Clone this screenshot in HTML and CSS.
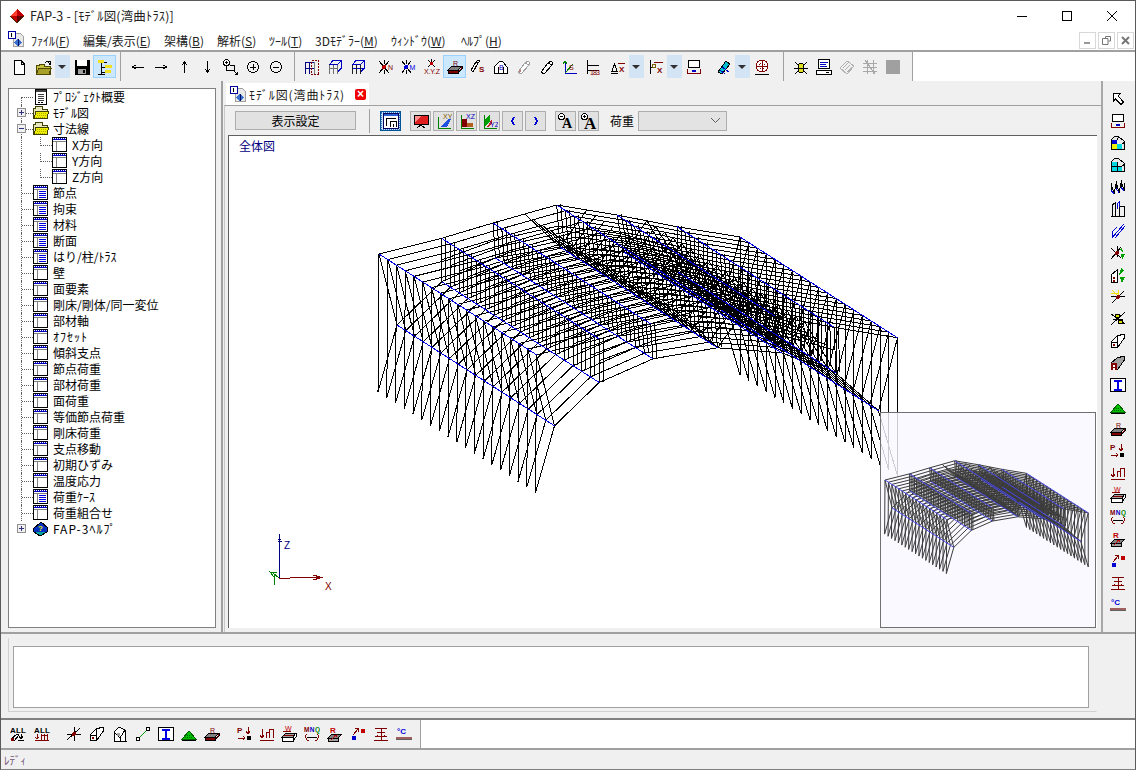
FILE: index.html
```html
<!DOCTYPE html>
<html lang="ja">
<head>
    <meta charset="UTF-8">
    <title>FAP-3 - [ﾓﾃﾞﾙ図(湾曲ﾄﾗｽ)]</title>
    <link rel="stylesheet" href="styles.css">
</head>
<body>
<svg class="sprite" aria-hidden="true">
    <defs>
        <symbol id="logo" viewBox="0 0 16 16"><path d="M8 1 15 8 8 15 1 8Z" fill="#c00000"/><path d="M8 1 8 8 1 8Z" fill="#ff4030"/><path d="M8 8 15 8 8 15Z" fill="#600000"/><path d="M1 8 8 15 15 8" fill="none" stroke="#403000"/></symbol>
        <symbol id="ap" viewBox="0 0 16 16"><path d="M5 2H12L15 5V15H5Z" fill="#e8e8e8" stroke="#a0a0a0"/><rect x="0.5" y="0.5" width="7" height="7" fill="#fff" stroke="#0000a0"/><path d="M3.5 2V6M3 2.5H4" stroke="#000"/><path d="M10 8 14 11.5 10 15 6 11.5Z" fill="#3a70d0"/><path d="M10 8V15" stroke="#001060"/></symbol>
        <symbol id="new" viewBox="0 0 16 16"><path d="M3.5 1.5H10L13.5 5V15.5H3.5Z M10 1.5V5H13.5" fill="#fff" stroke="#000"/></symbol>
        <symbol id="open" viewBox="0 0 16 16"><path d="M0.5 6.5H3L4 5H8V7H14V15H0.5Z" fill="#c8c040" stroke="#504800"/><path d="M0.5 15 3 9H15.5L13 15Z" fill="#a8a028" stroke="#504800"/><path d="M9 4 11 2H14V5M12.5 3.5 15 5 13 6" fill="none" stroke="#000"/></symbol>
        <symbol id="save" viewBox="0 0 16 16"><path d="M0.5 0.5H15.5V15.5H0.5Z" fill="#000"/><rect x="3" y="1" width="10" height="6" fill="#fff"/><rect x="4" y="10" width="8" height="5" fill="#a0a0a0"/><rect x="9" y="11" width="2" height="3" fill="#000"/></symbol>
        <symbol id="treeb" viewBox="0 0 16 16"><path d="M4.5 1V15M4.5 3H10M4.5 8H10M4.5 13H8M1 15H8" stroke="#000" fill="none"/><path d="M1 1H7V4H1ZM8 6H15V9H8ZM8 11H14V14H8Z" fill="#f0e020"/></symbol>
        <symbol id="al" viewBox="0 0 16 16"><path d="M2 8H14M2 8 6 6M2 8 6 10" stroke="#000" fill="none"/></symbol>
        <symbol id="ar" viewBox="0 0 16 16"><path d="M2 8H14M14 8 10 6M14 8 10 10" stroke="#000" fill="none"/></symbol>
        <symbol id="au" viewBox="0 0 16 16"><path d="M8.500 2V14M8.500 2 6.500 6M8.500 2 10.500 6" stroke="#000" fill="none"/></symbol>
        <symbol id="ad" viewBox="0 0 16 16"><path d="M8.500 2V14M8.500 14 6.500 10M8.500 14 10.500 10" stroke="#000" fill="none"/></symbol>
        <symbol id="zbox" viewBox="0 0 16 16"><circle cx="4.500" cy="3.500" r="3" fill="#fff" stroke="#000"/><path d="M4.500 2V5M3 3.500H6M4 7V11H12V6H8M12 12 15 15M13 15H15V13" stroke="#000" fill="none"/></symbol>
        <symbol id="zin" viewBox="0 0 16 16"><circle cx="8" cy="8" r="5.500" fill="none" stroke="#000"/><path d="M5 8H11M8 5V11" stroke="#000"/></symbol>
        <symbol id="zout" viewBox="0 0 16 16"><circle cx="8" cy="8" r="5.500" fill="none" stroke="#000"/><path d="M5 8H11" stroke="#000"/></symbol>
        <symbol id="f1" viewBox="0 0 16 16"><path d="M1 3.500H11M1 9.500H11M1.500 3V15M5.500 3V15" stroke="#000080" fill="none"/><path d="M7.500 1.500H14.500V15.500H7.500Z" stroke="#800000" stroke-dasharray="2 1" fill="none"/><path d="M10 3V15" stroke="#808080"/></symbol>
        <symbol id="f2" viewBox="0 0 16 16"><path d="M6 1.500H14.500L10.500 5.500H2.500ZM14.500 1.500V9L10.500 13" fill="none" stroke="#0000c0"/><path d="M2.500 5.500V15M6.500 5.500V15M10.500 5.500V15M2.500 9.500H10.500" stroke="#707070" fill="none"/></symbol>
        <symbol id="f3" viewBox="0 0 16 16"><path d="M6 1.500H14.500L10.500 5.500H2.500ZM14.500 1.500V9L10.500 13M2.500 9.500H14" fill="none" stroke="#0000c0"/><path d="M2.500 5.500V15M6.500 5.500V15M10.500 5.500V15" stroke="#202020" fill="none"/></symbol>
        <symbol id="sn" viewBox="0 0 16 16"><path d="M1 2 11 14M11 2 1 14M6 1V5M6 11V15" stroke="#000" fill="none"/><circle cx="6" cy="8" r="2" fill="#c00000"/><text x="10" y="11" class="t" fill="#800000">N</text></symbol>
        <symbol id="sm" viewBox="0 0 16 16"><path d="M1 2 10 14M10 2 1 14M5 1V5M5 11V15" stroke="#000" fill="none"/><circle cx="5" cy="8" r="2" fill="#0000e0"/><text x="8.500" y="11" class="t" fill="#0000e0">M</text></symbol>
        <symbol id="sxyz" viewBox="0 0 16 16"><path d="M4 1 11 8M11 1 4 8M7.500 0V3" stroke="#000" fill="none"/><circle cx="7.500" cy="4.500" r="1.500" fill="#c00000"/><text x="0" y="15" class="t" fill="#800000" textLength="16">X.Y.Z</text></symbol>
        <symbol id="plate" viewBox="0 0 16 16"><path d="M1 11 5 7H15L11 11Z" fill="#808080" stroke="#000"/><path d="M1 11H11V14H1ZM11 14 15 10V7" fill="#800000" stroke="#000"/><text x="6" y="7" class="t" fill="#800000">R</text></symbol>
        <symbol id="bs" viewBox="0 0 16 16"><path d="M1 11 6 3 8 4 3 13Z M6 3 8 1 10 2 8 4M8 4 3 13 1 11" fill="#fff" stroke="#000"/><text x="9" y="13" class="t b" fill="#800000">S</text></symbol>
        <symbol id="bb" viewBox="0 0 16 16"><path d="M1 8 7 2 10 3 14 8V14H1Z" fill="#fff" stroke="#000"/><path d="M5 8V14M10 8V14" stroke="#000"/><text x="6" y="11" class="t" fill="#0000c0">B</text></symbol>
        <symbol id="bgray" viewBox="0 0 16 16"><path d="M2 13 9 4 12 2 14 4 13 6 5 15Z M9 4 13 6" fill="#fff" stroke="#a0a0a0"/><rect x="3" y="11" width="2" height="2" fill="#c08080"/></symbol>
        <symbol id="bplain" viewBox="0 0 16 16"><path d="M2 13 9 4 12 2 14 4 13 6 5 15Z M9 4 13 6" fill="#fff" stroke="#000"/></symbol>
        <symbol id="axs" viewBox="0 0 16 16"><path d="M3 2V14H15" stroke="#0000c0" fill="none"/><path d="M3 2 1 5M3 2 5 5" stroke="#008000" fill="none"/><path d="M3 14 11 5" stroke="#008000"/><text x="7" y="11" class="t" fill="#800000">S</text></symbol>
        <symbol id="beamh" viewBox="0 0 16 16"><path d="M2 1V15M2 6H6M2 11H14M6 6H14" stroke="#000" fill="none"/><text x="5" y="16" class="t" fill="#800000" textLength="10">183</text></symbol>
        <symbol id="lx1" viewBox="0 0 16 16"><path d="M1 14H8M4.500 5 2 12H7Z" fill="none" stroke="#000"/><path d="M8 4H15" stroke="#800000"/><text x="9" y="13" class="t b" fill="#800000">X</text></symbol>
        <symbol id="lx2" viewBox="0 0 16 16"><path d="M2 1V15M2 8H6" stroke="#000" fill="none"/><circle cx="6" cy="7" r="2" fill="none" stroke="#806000"/><path d="M6 3H15" stroke="#800000"/><text x="9" y="14" class="t b" fill="#800000">X</text></symbol>
        <symbol id="brk" viewBox="0 0 16 16"><rect x="2.500" y="1.500" width="11" height="7" fill="#fff" stroke="#000"/><path d="M1.500 10V14.500H14.500V10" fill="none" stroke="#800000"/><rect x="6" y="11" width="4" height="2" fill="#0000c0"/></symbol>
        <symbol id="penb" viewBox="0 0 16 16"><path d="M2 13 10 2 14 5 6 15Z" fill="#00c0d0" stroke="#000"/><path d="M6 8 13 13M4 11 9 15" stroke="#0000c0"/></symbol>
        <symbol id="globe" viewBox="0 0 16 16"><circle cx="8" cy="7" r="6" fill="#fff" stroke="#800000"/><circle cx="8" cy="7" r="3" fill="none" stroke="#800000" stroke-dasharray="1 1"/><path d="M8 1V13M2 7H14" stroke="#800000"/><path d="M1 15H15" stroke="#000"/></symbol>
        <symbol id="bug" viewBox="0 0 16 16"><ellipse cx="8" cy="9" rx="3" ry="5" fill="#e0e020" stroke="#000"/><path d="M2 3 5 6M14 3 11 6M1 9H5M15 9H11M2 15 5 12M14 15 11 12M5 9H11" stroke="#000"/></symbol>
        <symbol id="pc" viewBox="0 0 16 16"><rect x="2.500" y="0.500" width="11" height="9" fill="#fff" stroke="#000"/><path d="M4 3H12M4 5H10M4 7H11" stroke="#0000c0"/><path d="M0.500 11.500H15.500V15.500H0.500Z" fill="#fff" stroke="#000"/><path d="M10 13H13" stroke="#000"/></symbol>
        <symbol id="g1" viewBox="0 0 16 16"><path d="M1 9 8 2 15 7 8 15Z M4 9 9 4M6 11 11 6M8 13 13 8" fill="none" stroke="#b0b0b0"/></symbol>
        <symbol id="g2" viewBox="0 0 16 16"><path d="M1 4H15M1 8H15M1 12H15M5 1V15M11 1V15M3 1 13 15" fill="none" stroke="#a8a8a8"/></symbol>
        <symbol id="g3" viewBox="0 0 16 16"><rect x="1" y="1" width="14" height="14" fill="#a0a0a0"/></symbol>
        <symbol id="cur" viewBox="0 0 16 16"><path d="M3.500 2.500H10L8 5 13.500 11 11 13.500 5.500 8 3.500 10Z" fill="#fff" stroke="#000"/></symbol>
        <symbol id="cube1" viewBox="0 0 16 16"><path d="M1.500 4.500 4.500 1.500H8.500L14.500 6.500V14.500H1.500Z" fill="#e8e8e8" stroke="#000"/><rect x="2" y="5" width="5" height="4" fill="#0000d0"/><rect x="2" y="9" width="5" height="5" fill="#f0f000"/><rect x="7" y="9" width="5" height="5" fill="#00d8e0"/><path d="M7 5 8.500 1.500M12.500 9 14.500 6.500" stroke="#000"/></symbol>
        <symbol id="cube2" viewBox="0 0 16 16"><path d="M1.500 4.500 4.500 1.500H8.500L14.500 6.500V14.500H1.500Z" fill="#e8e8e8" stroke="#000"/><rect x="2" y="5" width="5" height="9" fill="#00d8e0"/><rect x="7" y="9" width="5" height="5" fill="#00d8e0"/><path d="M2 9.500H12M7.500 5V14M12.500 9 14.500 6.500" stroke="#000"/></symbol>
        <symbol id="waves" viewBox="0 0 16 16"><path d="M1 4V11M6 2V9M11 1V8M1 4 4 15 6 5M6 2 9 14 11 4M11 1 14 12 15 4" fill="none" stroke="#000"/><path d="M1 11 4 15M6 9 9 14M11 8 14 12" stroke="#0000d0"/></symbol>
        <symbol id="wall" viewBox="0 0 16 16"><path d="M1 15H15M2 15V4L5 2V15M9 15V5H14V15" stroke="#000" fill="none"/><path d="M7 8V3L9 1V6" stroke="#0000d0" fill="none"/></symbol>
        <symbol id="pen2" viewBox="0 0 16 16"><path d="M2 15 14 1M5 15 15 3M2 15V9L7 4M5 15 9 11" fill="none" stroke="#0000d0"/></symbol>
        <symbol id="ngreen" viewBox="0 0 16 16"><path d="M1 14 11 2M1 3 11 13M7 1V12" stroke="#000"/><circle cx="7" cy="8" r="2" fill="#800000"/><path d="M10 5 12 2 13 7ZM11 9 15 9 12 15Z" fill="#00a000"/></symbol>
        <symbol id="bgreen" viewBox="0 0 16 16"><path d="M1 8 7 3V15H1Z" fill="#fff" stroke="#000"/><rect x="3" y="10" width="2" height="2" fill="#800000"/><rect x="3" y="13" width="2" height="2" fill="#800000"/><path d="M9 8 11 1 14 4ZM10 10 15 10 12 16Z" fill="#00a000"/></symbol>
        <symbol id="nyel" viewBox="0 0 16 16"><path d="M2 14 14 2" stroke="#000"/><path d="M1 7H15" stroke="#000"/><path d="M2 1 9 8M8 1V8M1 4H9" stroke="#f0e000"/><circle cx="8" cy="8" r="2" fill="#800000"/></symbol>
        <symbol id="nsq" viewBox="0 0 16 16"><path d="M1 3 15 13M15 1 1 14M3 8H13" stroke="#000"/><rect x="5" y="3" width="4" height="3" fill="#e0e000" stroke="#000"/><rect x="8" y="9" width="4" height="3" fill="#e0e000" stroke="#000"/></symbol>
        <symbol id="bred" viewBox="0 0 16 16"><path d="M1 8 7 3 14 1 15 4 8 14 1 15Z" fill="#a0a0a0" stroke="#000"/><rect x="1" y="8" width="6" height="7" fill="#800000"/><rect x="3" y="10" width="2" height="2" fill="#fff"/><rect x="3" y="13" width="2" height="2" fill="#fff"/></symbol>
        <symbol id="bar" viewBox="0 0 16 16"><path d="M1 9 7 3 14 1 15 4 8 14 1 15Z" fill="#fff" stroke="#000"/><path d="M7 3V14M1 9H7" stroke="#000"/><rect x="3" y="11" width="2" height="2" fill="#800000"/></symbol>
        <symbol id="ibeam" viewBox="0 0 16 16"><rect x="0.500" y="1.500" width="15" height="13" fill="#fff" stroke="#000" stroke-width="1"/><path d="M4 3.500H12M4 12.500H12M8 3V13" stroke="#0000e0" stroke-width="2"/></symbol>
        <symbol id="tri" viewBox="0 0 16 16"><path d="M1 13 8 5 15 13Z" fill="#00c000" stroke="#006000"/><path d="M4 11H12M6 9H10" stroke="#006000" stroke-dasharray="1 1"/><path d="M1 14H15" stroke="#000"/></symbol>
        <symbol id="pload" viewBox="0 0 16 16"><text x="0" y="7" class="t b" fill="#800000">P</text><path d="M11 1V8M9 5 11 8 13 5M1 12H8M6 10 8 12 6 14" stroke="#800000" fill="none"/><rect x="10" y="10" width="4" height="4" fill="#000"/></symbol>
        <symbol id="bload" viewBox="0 0 16 16"><path d="M3 3V12M1 9 3 12 5 9M1 14.500H15" stroke="#800000" fill="none"/><path d="M7 12V6H10V3H14V12M10 6V12" stroke="#800000" fill="none"/></symbol>
        <symbol id="wload" viewBox="0 0 16 16"><path d="M1 11 5 7H15L12 11Z" fill="#a0a0a0" stroke="#000"/><path d="M1 11H12V15H1ZM12 15 15 11V7" fill="#fff" stroke="#000"/><path d="M2 5H10M3 9H12" stroke="#800000"/><text x="4" y="5" class="t" fill="#c00000">W</text></symbol>
        <symbol id="mnq" viewBox="0 0 16 16"><text x="0" y="6" class="t b s7" textLength="16"><tspan fill="#800000">M</tspan><tspan fill="#0000c0">N</tspan><tspan fill="#008000">Q</tspan></text><path d="M3 11H13" stroke="#000"/><path d="M3 8 1 10 3 14 5 15M13 8 15 10 13 14 11 15" stroke="#800000" fill="none"/></symbol>
        <symbol id="rload" viewBox="0 0 16 16"><path d="M1 12 5 8H15L11 12Z" fill="#808080" stroke="#000"/><path d="M1 12H11V15H1Z" fill="#a0a0a0" stroke="#000"/><path d="M4 14 9 9M7 9H9V11" stroke="#c00000" fill="none"/><text x="3" y="7" class="t b" fill="#c00000">R</text></symbol>
        <symbol id="squares" viewBox="0 0 16 16"><rect x="11" y="3" width="4" height="4" fill="#c00000"/><rect x="2" y="10" width="4" height="4" fill="#0000d0"/><path d="M3 9 8 3M5 2.500H8.500V6" stroke="#800000" fill="none"/></symbol>
        <symbol id="hizumi" viewBox="0 0 16 16"><path d="M2 2.500H14M4 6.500H12M2 10.500H14M1 14.500H15M8 3V14M4 9 6 11M12 9 10 11" stroke="#800000" fill="none"/></symbol>
        <symbol id="degc" viewBox="0 0 16 16"><text x="1" y="8" class="t b" fill="#0000e0">°C</text><rect x="0" y="11" width="16" height="2" fill="#a06060"/><rect x="0" y="13" width="16" height="1" fill="#606060"/></symbol>
        <symbol id="all1" viewBox="0 0 16 16"><text x="0" y="7" class="t b" fill="#000" textLength="16">ALL</text><path d="M1 13 7 8 9 9 4 15ZM11 8V12M9 10 11 13 13 10M8 14.500H14" fill="none" stroke="#000"/><rect x="1" y="12" width="3" height="3" fill="#800000"/></symbol>
        <symbol id="all2" viewBox="0 0 16 16"><text x="0" y="7" class="t b" fill="#000" textLength="16">ALL</text><path d="M1 14.500H15M3 8V13M1 11 3 13 5 11M7 8V14M10 8V14M13 8V14M7 9H13" fill="none" stroke="#800000"/></symbol>
        <symbol id="hex" viewBox="0 0 16 16"><path d="M2 6 7 1 13 4 14 15H2Z" fill="#fff" stroke="#000"/><path d="M2 6 8 12 13 4M8 12V15" fill="none" stroke="#000"/><rect x="5" y="7" width="3" height="3" fill="#a0a0a0"/></symbol>
        <symbol id="lnode" viewBox="0 0 16 16"><path d="M3 13 13 3" stroke="#00a000" stroke-dasharray="2 1"/><rect x="1.500" y="11.500" width="3" height="3" fill="#fff" stroke="#000"/><rect x="11.500" y="1.500" width="3" height="3" fill="#fff" stroke="#000"/></symbol>
        <symbol id="ncross" viewBox="0 0 16 16"><path d="M1 14 14 2M1 8H15M8 1V15" stroke="#000"/><circle cx="8" cy="8" r="2" fill="#800000"/></symbol>
        <symbol id="vf" viewBox="0 0 16 16"><path d="M0.500 0.500H15.500V15.500H0.500Z" fill="#fff" stroke="#000060"/><rect x="1" y="1" width="14" height="2" fill="#3060d0"/><path d="M3.500 5.500H12.500M3.500 5V13M7.500 8.500H13.500V13.500M7.500 8V13.500M10.500 11V13.500" fill="none" stroke="#000"/></symbol>
        <symbol id="board" viewBox="0 0 16 16"><rect x="1" y="2" width="14" height="9" fill="#e02020" stroke="#000"/><path d="M2 3H9L2 9Z" fill="#ff9090"/><path d="M8 11V13M4 15 8 12 12 15" stroke="#000" fill="none"/></symbol>
        <symbol id="pxy" viewBox="0 0 16 16"><path d="M2 4V15H15" stroke="#008000" fill="none"/><path d="M4 14 12 6H15L11 14Z" fill="#2050e0"/><text x="7" y="5.500" class="t" fill="#806000">XY</text></symbol>
        <symbol id="pxz" viewBox="0 0 16 16"><path d="M2 2V15H15" stroke="#008000" fill="none"/><rect x="3" y="6" width="5" height="8" fill="#800000"/><rect x="8" y="10" width="6" height="4" fill="#b06020"/><text x="7" y="5.500" class="t" fill="#0000c0">XZ</text></symbol>
        <symbol id="pyz" viewBox="0 0 16 16"><path d="M2 2V15H15" stroke="#008000" fill="none"/><path d="M3 14V6L8 2V8L3 14Z" fill="#00a000"/><path d="M5 14 10 6V10L7 14Z" fill="#c02020"/><text x="8" y="14" class="t" fill="#0000c0">YZ</text></symbol>
        <symbol id="lt" viewBox="0 0 16 16"><path d="M9.500 4 6.500 8 9.500 12" stroke="#0000d0" stroke-width="1.500" fill="none"/></symbol>
        <symbol id="gt" viewBox="0 0 16 16"><path d="M6.500 4 9.500 8 6.500 12" stroke="#0000d0" stroke-width="1.500" fill="none"/></symbol>
        <symbol id="asm" viewBox="0 0 16 16"><circle cx="3.500" cy="3.500" r="3" fill="#fff" stroke="#000"/><path d="M2 3.500H5" stroke="#000"/><text x="4" y="15" class="a">A</text></symbol>
        <symbol id="alg" viewBox="0 0 16 16"><circle cx="3.500" cy="3.500" r="3" fill="#fff" stroke="#000"/><path d="M2 3.500H5M3.500 2V5" stroke="#000"/><text x="3" y="15.500" class="a lg">A</text></symbol>
        <symbol id="prj" viewBox="0 0 16 16"><path d="M2.500 0.500H13.500V15.500H2.500Z" fill="#fff" stroke="#000"/><rect x="3" y="1" width="10" height="2" fill="#404040"/><path d="M5 5H11M5 7H11M5 9H11M5 11H11" stroke="#404040"/><path d="M5 13H11" stroke="#000" stroke-dasharray="2 1"/></symbol>
        <symbol id="fold" viewBox="0 0 16 16"><path d="M0.500 3.500H2L3 1.500H9V4H14.500V13.500H0.500Z" fill="#e8e8c0" stroke="#404000"/><path d="M1 13.500 3 6.500H15.500L14 14Z" fill="#f0f000" stroke="#404000"/><path d="M4 8H14M4 10H14M3 12H13" stroke="#a8a800" stroke-dasharray="1 1"/></symbol>
        <symbol id="tbl" viewBox="0 0 16 16"><rect x="0.500" y="0.500" width="14" height="14" fill="#fff" stroke="#000"/><rect x="1" y="1" width="13" height="2" fill="#0000c0"/><path d="M1 1.500H14" stroke="#fff" stroke-dasharray="1 1"/><path d="M1 4.500H14M4.500 4V14" stroke="#808080"/></symbol>
        <symbol id="tbb" viewBox="0 0 16 16"><rect x="0.500" y="0.500" width="14" height="14" fill="#fff" stroke="#000"/><rect x="1" y="1" width="13" height="2" fill="#0000c0"/><path d="M1 1.500H14" stroke="#fff" stroke-dasharray="1 1"/><path d="M1 4.500H14M4.500 4V14" stroke="#808080"/><path d="M6 6.500H13M6 8.500H13M6 10.500H13M6 12.500H13" stroke="#0000e0"/></symbol>
        <symbol id="book" viewBox="0 0 16 16"><path d="M0 8 8 1 15 7 14 11 7 15 1 11Z" fill="#0030c0" stroke="#000"/><path d="M1 11 7 15 14 11" fill="#00a0a0" stroke="#000"/><text x="5" y="10" class="t b" fill="#f0f000">?</text></symbol>
    </defs>
</svg>

<div class="window">
    <div class="titlebar">
        <svg class="ic logo"><use href="#logo"/></svg>
        <span class="title-text">FAP-3 - [ﾓﾃﾞﾙ図(湾曲ﾄﾗｽ)]</span>
        <div class="win-btns">
            <div class="win-btn"><svg width="12" height="12"><path d="M1 6.500H11" stroke="#000"/></svg></div>
            <div class="win-btn"><svg width="12" height="12"><rect x="1.500" y="1.500" width="9" height="9" fill="none" stroke="#000"/></svg></div>
            <div class="win-btn"><svg width="12" height="12"><path d="M1 1 11 11M11 1 1 11" stroke="#000"/></svg></div>
        </div>
    </div>

    <div class="menubar">
        <svg class="ic menu-icon"><use href="#ap"/></svg>
        <div class="menu-items">
            <span>ﾌｧｲﾙ(<u>F</u>)</span>
            <span>編集/表示(<u>E</u>)</span>
            <span>架構(<u>B</u>)</span>
            <span>解析(<u>S</u>)</span>
            <span>ﾂｰﾙ(<u>T</u>)</span>
            <span>3Dﾓﾃﾞﾗｰ(<u>M</u>)</span>
            <span>ｳｨﾝﾄﾞｳ(<u>W</u>)</span>
            <span>ﾍﾙﾌﾟ(<u>H</u>)</span>
        </div>
        <div class="mdi-btns">
            <div class="mdi-btn"><svg width="9" height="9"><rect x="1" y="6" width="6" height="2" fill="#999"/></svg></div>
            <div class="mdi-btn"><svg width="9" height="9"><path d="M3.500 2.500V0.500H8.500V5H6.500M0.500 2.500H6V8.500H0.500Z" fill="none" stroke="#777"/></svg></div>
            <div class="mdi-btn"><svg width="9" height="9"><path d="M1 1 8 8M8 1 1 8" stroke="#777" stroke-width="2"/></svg></div>
        </div>
    </div>

    <div class="toolbar">
        <div class="tb-group first">
            <div class="tb"><svg class="ic"><use href="#new"/></svg></div>
            <div class="tb sp2"><svg class="ic"><use href="#open"/></svg></div>
            <div class="drop"></div>
            <div class="tb"><svg class="ic"><use href="#save"/></svg></div>
            <div class="tb on"><svg class="ic"><use href="#treeb"/></svg></div>
        </div>
        <div class="tb-group">
            <div class="tb"><svg class="ic"><use href="#al"/></svg></div>
            <div class="tb"><svg class="ic"><use href="#ar"/></svg></div>
            <div class="tb"><svg class="ic"><use href="#au"/></svg></div>
            <div class="tb"><svg class="ic"><use href="#ad"/></svg></div>
            <div class="tb"><svg class="ic"><use href="#zbox"/></svg></div>
            <div class="tb"><svg class="ic"><use href="#zin"/></svg></div>
            <div class="tb"><svg class="ic"><use href="#zout"/></svg></div>
        </div>
        <div class="tb-group wide">
            <div class="tb"><svg class="ic"><use href="#f1"/></svg></div>
            <div class="tb"><svg class="ic"><use href="#f2"/></svg></div>
            <div class="tb"><svg class="ic"><use href="#f3"/></svg></div>
            <div class="tb sp5"><svg class="ic"><use href="#sn"/></svg></div>
            <div class="tb"><svg class="ic"><use href="#sm"/></svg></div>
            <div class="tb"><svg class="ic"><use href="#sxyz"/></svg></div>
            <div class="tb on"><svg class="ic"><use href="#plate"/></svg></div>
            <div class="tb"><svg class="ic"><use href="#bs"/></svg></div>
            <div class="tb"><svg class="ic"><use href="#bb"/></svg></div>
            <div class="tb"><svg class="ic"><use href="#bgray"/></svg></div>
            <div class="tb"><svg class="ic"><use href="#bplain"/></svg></div>
            <div class="tb"><svg class="ic"><use href="#axs"/></svg></div>
            <div class="tb"><svg class="ic"><use href="#beamh"/></svg></div>
            <div class="tb sp2"><svg class="ic"><use href="#lx1"/></svg></div>
            <div class="drop"></div>
            <div class="tb"><svg class="ic"><use href="#lx2"/></svg></div>
            <div class="drop"></div>
            <div class="tb"><svg class="ic"><use href="#brk"/></svg></div>
            <div class="tb sp7"><svg class="ic"><use href="#penb"/></svg></div>
            <div class="drop"></div>
            <div class="tb"><svg class="ic"><use href="#globe"/></svg></div>
        </div>
        <div class="tb-group last">
            <div class="tb"><svg class="ic"><use href="#bug"/></svg></div>
            <div class="tb"><svg class="ic"><use href="#pc"/></svg></div>
            <div class="tb"><svg class="ic"><use href="#g1"/></svg></div>
            <div class="tb"><svg class="ic"><use href="#g2"/></svg></div>
            <div class="tb"><svg class="ic"><use href="#g3"/></svg></div>
        </div>
    </div>

    <div class="main">
        <div class="side">
            <div class="tree">
                <div class="row start"><svg class="ic"><use href="#prj"/></svg><span>ﾌﾟﾛｼﾞｪｸﾄ概要</span></div>
                <div class="row"><i class="box plus"></i><svg class="ic"><use href="#fold"/></svg><span>ﾓﾃﾞﾙ図</span></div>
                <div class="row"><i class="box minus"></i><svg class="ic"><use href="#fold"/></svg><span>寸法線</span></div>
                <div class="row child"><svg class="ic"><use href="#tbl"/></svg><span>X方向</span></div>
                <div class="row child"><svg class="ic"><use href="#tbl"/></svg><span>Y方向</span></div>
                <div class="row child last-child"><svg class="ic"><use href="#tbl"/></svg><span>Z方向</span></div>
                <div class="row"><svg class="ic"><use href="#tbb"/></svg><span>節点</span></div>
                <div class="row"><svg class="ic"><use href="#tbb"/></svg><span>拘束</span></div>
                <div class="row"><svg class="ic"><use href="#tbb"/></svg><span>材料</span></div>
                <div class="row"><svg class="ic"><use href="#tbb"/></svg><span>断面</span></div>
                <div class="row"><svg class="ic"><use href="#tbb"/></svg><span>はり/柱/ﾄﾗｽ</span></div>
                <div class="row"><svg class="ic"><use href="#tbl"/></svg><span>壁</span></div>
                <div class="row"><svg class="ic"><use href="#tbl"/></svg><span>面要素</span></div>
                <div class="row"><svg class="ic"><use href="#tbl"/></svg><span>剛床/剛体/同一変位</span></div>
                <div class="row"><svg class="ic"><use href="#tbl"/></svg><span>部材軸</span></div>
                <div class="row"><svg class="ic"><use href="#tbl"/></svg><span class="wide-kana">ｵﾌｾｯﾄ</span></div>
                <div class="row"><svg class="ic"><use href="#tbl"/></svg><span>傾斜支点</span></div>
                <div class="row"><svg class="ic"><use href="#tbl"/></svg><span>節点荷重</span></div>
                <div class="row"><svg class="ic"><use href="#tbl"/></svg><span>部材荷重</span></div>
                <div class="row"><svg class="ic"><use href="#tbl"/></svg><span>面荷重</span></div>
                <div class="row"><svg class="ic"><use href="#tbl"/></svg><span>等価節点荷重</span></div>
                <div class="row"><svg class="ic"><use href="#tbl"/></svg><span>剛床荷重</span></div>
                <div class="row"><svg class="ic"><use href="#tbl"/></svg><span>支点移動</span></div>
                <div class="row"><svg class="ic"><use href="#tbl"/></svg><span>初期ひずみ</span></div>
                <div class="row"><svg class="ic"><use href="#tbl"/></svg><span>温度応力</span></div>
                <div class="row"><svg class="ic"><use href="#tbb"/></svg><span>荷重ｹｰｽ</span></div>
                <div class="row"><svg class="ic"><use href="#tbl"/></svg><span>荷重組合せ</span></div>
                <div class="row end"><i class="box plus"></i><svg class="ic"><use href="#book"/></svg><span class="wide-kana">FAP-3ﾍﾙﾌﾟ</span></div>
            </div>
        </div>

        <div class="work">
            <div class="tabstrip">
                <div class="tab">
                    <svg class="ic"><use href="#ap"/></svg>
                    <span>ﾓﾃﾞﾙ図(湾曲ﾄﾗｽ)</span>
                    <i class="tab-close"></i>
                </div>
            </div>
            <div class="pane">
                <div class="view-tools">
                    <button class="btn-settings">表示設定</button>
                    <div class="vt-sep"></div>
                    <div class="vb selected"><svg class="ic"><use href="#vf"/></svg></div>
                    <div class="vb ml9"><svg class="ic"><use href="#board"/></svg></div>
                    <div class="vb"><svg class="ic"><use href="#pxy"/></svg></div>
                    <div class="vb"><svg class="ic"><use href="#pxz"/></svg></div>
                    <div class="vb"><svg class="ic"><use href="#pyz"/></svg></div>
                    <div class="vb"><svg class="ic"><use href="#lt"/></svg></div>
                    <div class="vb"><svg class="ic"><use href="#gt"/></svg></div>
                    <div class="vb ml9"><svg class="ic"><use href="#asm"/></svg></div>
                    <div class="vb"><svg class="ic"><use href="#alg"/></svg></div>
                    <span class="load-label">荷重</span>
                    <div class="combo"><svg width="11" height="7"><path d="M1 1 5.500 5.500 10 1" fill="none" stroke="#606060"/></svg></div>
                </div>
                <div class="view">
                    <div class="view-name">全体図</div>
                    <svg id="truss" class="canvas" viewBox="229 136 868 492"></svg>
                    <svg class="canvas" viewBox="229 136 868 492">
                        <path d="M279.500 578V534M277.500 541H281.500M278 539H281" stroke="#000080" fill="none"/>
                        <text x="284" y="549" class="ax" fill="#000080">Z</text>
                        <path d="M279 578H290M290 577.500H312M312 577.500H323M313 575 320 577M313 580 320 578" stroke="#800000" fill="none"/>
                        <text x="325" y="590" class="ax" fill="#800000">X</text>
                        <path d="M279 578 273 573 270 572 274 577M274 574V585M272 572 277 573" stroke="#008000" fill="none"/>
                    </svg>
                    <div class="mini"><svg id="miniTruss" width="214" height="214" viewBox="0 0 214 214"></svg></div>
                </div>
            </div>
        </div>

        <div class="rtools">
            <div class="rb"><svg class="ic"><use href="#cur"/></svg></div>
            <div class="rb"><svg class="ic"><use href="#brk"/></svg></div>
            <div class="rb"><svg class="ic"><use href="#cube1"/></svg></div>
            <div class="rb"><svg class="ic"><use href="#cube2"/></svg></div>
            <div class="rb"><svg class="ic"><use href="#waves"/></svg></div>
            <div class="rb"><svg class="ic"><use href="#wall"/></svg></div>
            <div class="rb"><svg class="ic"><use href="#pen2"/></svg></div>
            <div class="rb"><svg class="ic"><use href="#ngreen"/></svg></div>
            <div class="rb"><svg class="ic"><use href="#bgreen"/></svg></div>
            <div class="rb"><svg class="ic"><use href="#nyel"/></svg></div>
            <div class="rb"><svg class="ic"><use href="#nsq"/></svg></div>
            <div class="rb"><svg class="ic"><use href="#bar"/></svg></div>
            <div class="rb"><svg class="ic"><use href="#bred"/></svg></div>
            <div class="rb"><svg class="ic"><use href="#ibeam"/></svg></div>
            <div class="rb"><svg class="ic"><use href="#tri"/></svg></div>
            <div class="rb"><svg class="ic"><use href="#plate"/></svg></div>
            <div class="rb"><svg class="ic"><use href="#pload"/></svg></div>
            <div class="rb"><svg class="ic"><use href="#bload"/></svg></div>
            <div class="rb"><svg class="ic"><use href="#wload"/></svg></div>
            <div class="rb"><svg class="ic"><use href="#mnq"/></svg></div>
            <div class="rb"><svg class="ic"><use href="#rload"/></svg></div>
            <div class="rb"><svg class="ic"><use href="#squares"/></svg></div>
            <div class="rb"><svg class="ic"><use href="#hizumi"/></svg></div>
            <div class="rb"><svg class="ic"><use href="#degc"/></svg></div>
        </div>
    </div>

    <div class="messages">
        <div class="msg-frame"><div class="msg-box"></div></div>
    </div>

    <div class="bottom-tools">
        <div class="bt-group">
            <div class="bt w24"><svg class="ic"><use href="#all1"/></svg></div>
            <div class="bt w24"><svg class="ic"><use href="#all2"/></svg></div>
            <div class="bt ml8"><svg class="ic"><use href="#ncross"/></svg></div>
            <div class="bt"><svg class="ic"><use href="#bar"/></svg></div>
            <div class="bt"><svg class="ic"><use href="#hex"/></svg></div>
            <div class="bt"><svg class="ic"><use href="#lnode"/></svg></div>
            <div class="bt"><svg class="ic"><use href="#ibeam"/></svg></div>
            <div class="bt"><svg class="ic"><use href="#tri"/></svg></div>
            <div class="bt"><svg class="ic"><use href="#plate"/></svg></div>
            <div class="bt ml10"><svg class="ic"><use href="#pload"/></svg></div>
            <div class="bt w21"><svg class="ic"><use href="#bload"/></svg></div>
            <div class="bt"><svg class="ic"><use href="#wload"/></svg></div>
            <div class="bt"><svg class="ic"><use href="#mnq"/></svg></div>
            <div class="bt"><svg class="ic"><use href="#rload"/></svg></div>
            <div class="bt"><svg class="ic"><use href="#squares"/></svg></div>
            <div class="bt"><svg class="ic"><use href="#hizumi"/></svg></div>
            <div class="bt"><svg class="ic"><use href="#degc"/></svg></div>
        </div>
    </div>

    <div class="statusbar">ﾚﾃﾞｨ</div>
</div>

<script src="truss.js"></script>
</body>
</html>
```

FILE: styles.css
```css
* {
    box-sizing: border-box;
}
html, body {
    margin: 0;
    padding: 0;
    width: 1136px;
    height: 770px;
    overflow: hidden;
}
body {
    font-family: "Noto Sans CJK JP", "Noto Sans", sans-serif;
    font-size: 12px;
    color: #000;
    background-color: #f0f0f0;
}
.sprite {
    position: absolute;
    width: 0;
    height: 0;
}
.ic {
    display: block;
    width: 16px;
    height: 16px;
    flex: none;
    shape-rendering: crispEdges;
}
.t {
    font: 7px "Liberation Sans", sans-serif;
}
.b {
    font-weight: bold;
    font-size: 8px;
}
.s7 {
    font-size: 6.5px;
}
.a {
    font: bold 14px "Liberation Serif", serif;
}
.lg {
    font-size: 17px;
}
.ax {
    font: 10px "Liberation Sans", sans-serif;
}
.window {
    width: 1136px;
    height: 770px;
    display: flex;
    flex-direction: column;
    border: 1px solid #5a5a5a;
    border-bottom-color: #808080;
}

/* title bar */
.titlebar {
    height: 29px;
    display: flex;
    align-items: center;
    background-color: #fff;
    padding-left: 8px;
}
.title-text {
    margin-left: 5px;
    font-family: "Noto Sans CJK JP", sans-serif;
    font-size: 12.5px;
    letter-spacing: 0.15px;
    color: #222;
}
.win-btns {
    margin-left: auto;
    display: flex;
    padding-right: 1px;
}
.win-btn {
    width: 45px;
    height: 29px;
    display: flex;
    align-items: center;
    justify-content: center;
}

/* menu */
.menubar {
    height: 22px;
    display: flex;
    align-items: center;
    background-color: #fff;
    border-bottom: 2px solid #a0a0a0;
    padding-left: 7px;
}
.menu-icon {
    margin-top: -2px;
}
.menu-items {
    margin-left: 7px;
    display: grid;
    grid-template-columns: 52px 81px 53px 52px 46px 76px 70px 60px;
    font-size: 12px;
    color: #222;
    white-space: nowrap;
}
.mdi-btns {
    margin-left: auto;
    display: flex;
    gap: 2px;
    padding-right: 1px;
}
.mdi-btn {
    width: 17px;
    height: 17px;
    display: flex;
    align-items: center;
    justify-content: center;
    border: 1px solid #d8d8d8;
    background-color: #fff;
}

/* top toolbar */
.toolbar {
    height: 29px;
    display: flex;
    background-color: #fff;
}
.tb-group {
    display: flex;
    align-items: center;
    width: 174px;
    height: 29px;
    background-color: #f0f0f0;
    border-right: 1px solid #a0a0a0;
    padding-left: 5px;
}
.tb-group.first {
    width: 120px;
    padding-left: 6px;
}
.tb-group.wide {
    width: 489px;
}
.tb-group.last {
    width: 129px;
}
.tb {
    width: 23px;
    height: 23px;
    display: flex;
    align-items: center;
    justify-content: center;
    flex: none;
}
.tb.on {
    background-color: #cce8ff;
    border: 1px solid #99d1ff;
}
.tb.sp2 {
    margin-left: 2px;
}
.tb.sp5 {
    margin-left: 5px;
}
.tb.sp7 {
    margin-left: 7px;
}
.drop {
    width: 15px;
    height: 23px;
    flex: none;
    background-color: #d3e5f4;
    position: relative;
}
.drop::after {
    content: "";
    position: absolute;
    left: 3px;
    top: 10px;
    border-left: 4px solid transparent;
    border-right: 4px solid transparent;
    border-top: 4px solid #303030;
}

/* main area */
.main {
    height: 551px;
    display: flex;
}
.side {
    width: 220px;
    padding: 7px 0 0 7px;
}
.tree {
    width: 208px;
    height: 540px;
    background-color: #fff;
    border: 1px solid #808080;
}
.row {
    position: relative;
    height: 16px;
    display: flex;
    align-items: center;
    padding-left: 24px;
    white-space: nowrap;
}
.row span {
    margin-left: 4px;
    line-height: 16px;
}
.row .wide-kana {
    letter-spacing: 1px;
}
.row::before {
    content: "";
    position: absolute;
    left: 12px;
    top: 0;
    height: 16px;
    width: 11px;
    border-left: 1px dotted #606060;
    background: linear-gradient(90deg, #606060 50%, transparent 50%) 0 8px / 2px 1px repeat-x;
}
.row.start::before {
    top: 8px;
    height: 8px;
    background-position: 0 0;
}
.row.child::before {
    background: none;
    width: 0;
}
.row.child::after {
    content: "";
    position: absolute;
    left: 31px;
    top: 0;
    height: 8px;
    width: 11px;
    border-left: 1px dotted #606060;
    border-bottom: 1px dotted #606060;
}
.row.end::before {
    height: 0;
    border: 0;
}
.row.child {
    padding-left: 43px;
}
.box {
    position: absolute;
    left: 8px;
    top: 3px;
    width: 9px;
    height: 9px;
    z-index: 1;
    background-color: #f0f0f0;
    border: 1px solid #909090;
}
.box::before {
    content: "";
    position: absolute;
    left: 1px;
    top: 3px;
    width: 5px;
    height: 1px;
    background-color: #303080;
}
.box.plus::after {
    content: "";
    position: absolute;
    left: 3px;
    top: 1px;
    width: 1px;
    height: 5px;
    background-color: #303080;
}

.work {
    width: 880px;
    border-left: 2px solid #a0a0a0;
    padding-left: 1px;
}
.tabstrip {
    height: 24px;
    padding: 2px 0 0 2px;
}
.tab {
    width: 143px;
    height: 22px;
    display: flex;
    align-items: center;
    padding-left: 4px;
    background-color: #fff;
}
.tab span {
    margin-left: 3px;
    width: 106px;
    font-size: 12px;
    letter-spacing: 0.9px;
    color: #222;
    white-space: nowrap;
}
.tab-close {
    display: block;
    width: 11px;
    height: 11px;
    border-radius: 2px;
    background-color: #f00000;
    position: relative;
}
.tab-close::after {
    content: "×";
    position: absolute;
    left: 0;
    top: -4px;
    width: 11px;
    text-align: center;
    color: #fff;
    font: bold 12px/18px "Liberation Sans", sans-serif;
}
.pane {
    height: 527px;
    border-top: 1px solid #a0a0a0;
    border-left: 1px solid #c8c8c8;
    padding-left: 3px;
}
.view-tools {
    height: 29px;
    display: flex;
    align-items: center;
    padding-left: 7px;
}
.btn-settings {
    width: 121px;
    height: 19px;
    padding: 0;
    background-color: #e1e1e1;
    border: 1px solid #adadad;
    font: 12px "Noto Sans CJK JP", sans-serif;
    line-height: 15px;
    color: #000;
}
.vt-sep {
    width: 1px;
    height: 24px;
    margin: 0 10px 0 13px;
    background-color: #a0a0a0;
}
.vb {
    width: 21px;
    height: 20px;
    margin-right: 2px;
    display: flex;
    align-items: center;
    justify-content: center;
    background-color: #e1e1e1;
    border: 1px solid #adadad;
    flex: none;
}
.vb.selected {
    background-color: #cce4f7;
    border: 1px solid #005499;
    outline: 1px dotted #3070c0;
    outline-offset: -2px;
}
.vb.ml9 {
    margin-left: 7px;
}
.load-label {
    margin-left: 9px;
    font-size: 12px;
}
.combo {
    width: 89px;
    height: 20px;
    margin-left: 4px;
    display: flex;
    align-items: center;
    justify-content: flex-end;
    padding-right: 5px;
    background-color: #e3e3e3;
    border: 1px solid #adadad;
}
.view {
    position: relative;
    width: 869px;
    height: 493px;
    background-color: #fff;
    border-top: 1px solid #606060;
    border-left: 1px solid #606060;
}
.view-name {
    position: absolute;
    left: 10px;
    top: 1px;
    color: #000080;
    font-size: 12px;
}
.canvas {
    position: absolute;
    left: 0;
    top: 0;
    width: 868px;
    height: 492px;
    shape-rendering: crispEdges;
}
.mini {
    position: absolute;
    right: 1px;
    bottom: 0;
    width: 216px;
    height: 216px;
    background-color: rgba(248, 248, 255, 0.82);
    border: 1px solid #707070;
}
.mini svg {
    display: block;
}

.rtools {
    width: 34px;
    border-left: 2px solid #a8a8a8;
    padding-top: 7px;
}
.rb {
    height: 22px;
    display: flex;
    align-items: center;
    justify-content: center;
    padding-right: 2px;
}

/* message pane */
.messages {
    height: 88px;
    border-top: 2px solid #a0a0a0;
    border-bottom: 2px solid #808080;
    padding: 4px 38px 6px 7px;
}
.msg-frame {
    height: 74px;
    border: 1px solid #d0d0d0;
    border-top-color: transparent;
    border-right-color: transparent;
    padding: 7px 7px 0 4px;
}
.msg-box {
    height: 62px;
    background-color: #fff;
    border: 1px solid #a0a0a0;
}

/* bottom toolbar and status */
.bottom-tools {
    height: 30px;
    background-color: #fff;
    border-bottom: 2px solid #a0a0a0;
}
.bt-group {
    width: 420px;
    height: 28px;
    display: flex;
    align-items: center;
    padding-left: 5px;
    background-color: #f0f0f0;
    border-right: 1px solid #a0a0a0;
}
.bt {
    width: 23px;
    display: flex;
    justify-content: center;
    flex: none;
}
.bt.w24 {
    width: 24px;
}
.bt.w21 {
    width: 21px;
}
.bt.ml8 {
    margin-left: 8px;
}
.bt.ml10 {
    margin-left: 10px;
}
.statusbar {
    height: 19px;
    padding-left: 3px;
    line-height: 20px;
    font-size: 11px;
    color: #705070;
}
```

FILE: truss.js
```js
// model drawn in page coordinates, one frame repeated along the building
(function () {
    var upper = [[379, 254], [441.7, 238.3], [493, 223], [556.7, 205], [617, 215], [677, 226.7], [740, 237]];
    var lower = [[397, 325], [441.7, 281.7], [495.5, 258], [560, 247], [624, 252], [678, 272], [721, 310]];
    var footL = [378, 392];
    var footR = [740, 375];
    var bays = 18;
    var dx = 8.75;
    var dy = 5.6;

    function seg(p, q, i, j) {
        return "M" + (p[0] + i * dx).toFixed(1) + " " + (p[1] + i * dy).toFixed(1) +
            "L" + (q[0] + j * dx).toFixed(1) + " " + (q[1] + j * dy).toFixed(1);
    }

    function mid(p, q, t) {
        return [p[0] + (q[0] - p[0]) * t, p[1] + (q[1] - p[1]) * t];
    }

    function shift(p, x, y) {
        return [p[0] + x, p[1] + y];
    }

    function buildPaths() {
        var black = "";
        var blue = "";
        for (var i = 0; i <= bays; i++) {
            for (var p = 0; p < upper.length - 1; p++) {
                black += seg(upper[p], upper[p + 1], i, i);
                black += seg(lower[p], lower[p + 1], i, i);
                // purlin line half way down the truss, inner panels only
                if (p > 0 && p < 5) {
                    black += seg(mid(upper[p], lower[p], 0.5), mid(upper[p + 1], lower[p + 1], 0.5), i, i);
                }
            }
            for (var w = 1; w < upper.length - 1; w++) {
                black += seg(upper[w], lower[w], i, i);
                // second web member beside the first
                black += seg(shift(upper[w], 4, -1), shift(lower[w], 4, -1), i, i);
            }
            // apex diagonals
            black += seg(lower[3], mid(upper[3], upper[2], 0.5), i, i);
            black += seg(lower[3], mid(upper[3], upper[4], 0.5), i, i);
            black += seg(lower[4], mid(upper[4], upper[5], 0.5), i, i);
            black += seg(lower[5], mid(upper[5], upper[4], 0.5), i, i);
            // columns
            black += seg(upper[0], footL, i, i) + seg(upper[0], lower[0], i, i) + seg(lower[0], footL, i, i);
            black += seg(upper[6], footR, i, i) + seg(upper[6], lower[6], i, i) + seg(lower[6], footR, i, i);
        }
        for (var k = 0; k < upper.length; k++) {
            blue += seg(upper[k], upper[k], 0, bays);
            blue += seg(lower[k], lower[k], 0, bays);
        }
        return { black: black, blue: blue };
    }

    function addPath(svg, d, color, fit) {
        var path = document.createElementNS("http://www.w3.org/2000/svg", "path");
        path.setAttribute("d", d);
        path.setAttribute("fill", "none");
        path.setAttribute("stroke", color);
        if (fit) {
            path.setAttribute("transform", fit);
            path.setAttribute("vector-effect", "non-scaling-stroke");
        }
        svg.appendChild(path);
    }

    var model = buildPaths();
    var main = document.getElementById("truss");
    addPath(main, model.black, "#000");
    addPath(main, model.blue, "#0000e0");

    var mini = document.getElementById("miniTruss");
    var fit = "translate(4 67) scale(0.392) translate(-379 -254)";
    addPath(mini, model.black, "#3c3c3c", fit);
    addPath(mini, model.blue, "#4848e8", fit);
})();
```
